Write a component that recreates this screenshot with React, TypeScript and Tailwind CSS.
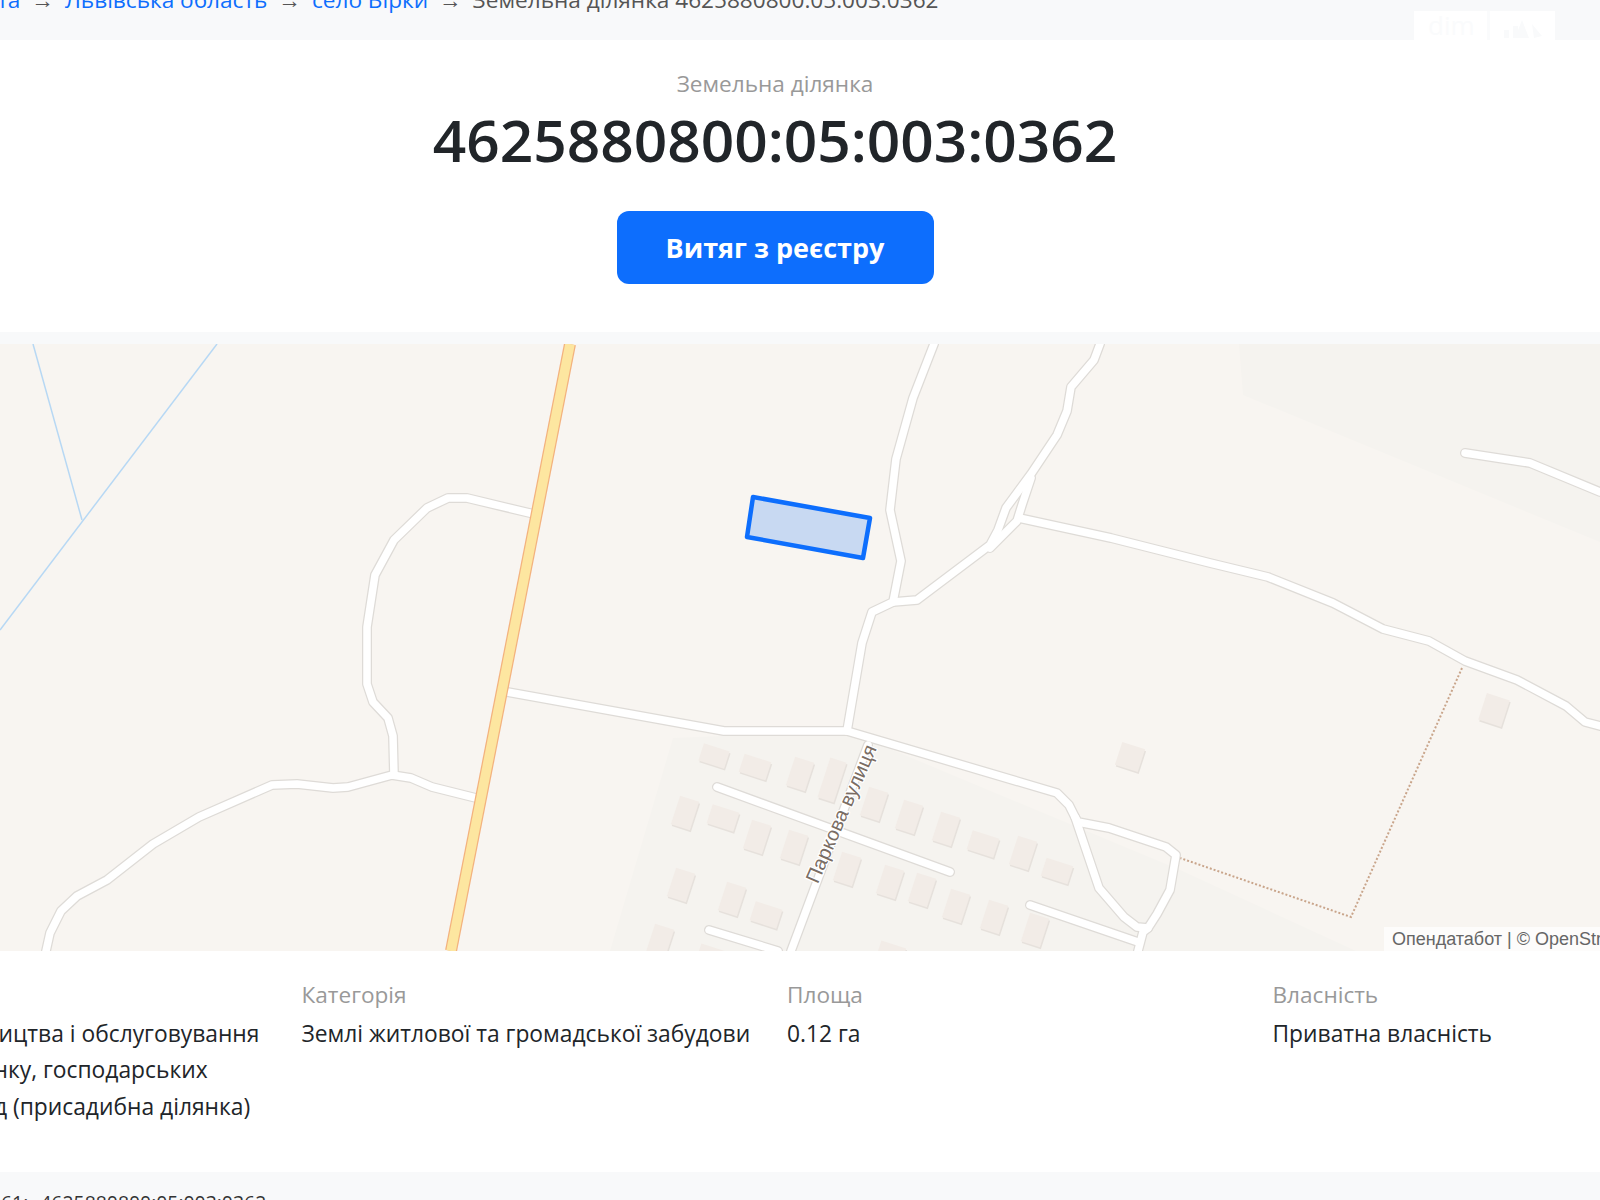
const font = "font-['Open_Sans','Noto_Sans',sans-serif]";

const roads = [
  'M534 514L467 498L448 498L427 508L394 540L375 575L367 627L367 684L373 702L388 718L393 736L394 775',
  'M476 798L432 787L411 778L392 775L348 787L333 788L297 784L272 785L199 817L153 844L107 880L77 896L61 911L50 933L46 951',
  'M507 692L724 731L847 731L1057 793L1069 805L1075 817L1099 888L1124 917L1137 927L1148 928',
  'M1075 817L1078 822L1109 828L1166 847L1176 855L1170 890L1157 914L1148 928L1143 932L1138 951',
  'M934 344L913 398L896 459L890 510L901 561L893 602L872 612L862 643L847 731',
  'M893 602L917 600L990 545L998 530L1006 508L1031 474L1057 435L1067 411L1071 387L1094 360L1100 344',
  'M990 548L1017 521L1022 505L1031 478',
  'M1019 518L1111 538L1210 563L1268 577L1333 603L1383 629L1429 641L1465 661L1517 680L1566 706L1585 722L1600 726',
  'M1465 453L1530 463L1600 492',
  'M717 787L950 872',
  'M709 930L778 951',
  'M1030 905L1138 942',
  'M868 745L791 951',
];

// x, y, w, h
const buildings = [
  [714, 756, 27, 18], [755, 767, 28, 19], [800, 774, 20, 30], [832, 780, 17, 42],
  [874, 804, 20, 30], [909, 817, 20, 30], [946, 829, 20, 30], [983, 844, 28, 20],
  [1023, 853, 20, 30], [1057, 871, 28, 19], [685, 813, 20, 30], [723, 818, 28, 20],
  [757, 837, 20, 30], [794, 847, 20, 30], [847, 869, 20, 30], [890, 882, 20, 30],
  [922, 890, 20, 30], [956, 906, 20, 30], [994, 917, 20, 30], [1035, 930, 20, 30],
  [681, 885, 20, 30], [732, 899, 20, 30], [766, 915, 28, 20], [660, 941, 20, 30],
  [711, 956, 26, 18], [891, 953, 26, 18], [1130, 757, 24, 24], [1494, 710, 24, 28],
];

function ParcelMap() {
  return (
    <svg viewBox="0 344 1600 607" className="block w-full h-full">
      <rect x="0" y="344" width="1600" height="607" fill="#f8f5f1" />
      <path d="M1239 344L1243 395L1600 542L1600 344Z" fill="#f5f3ef" />
      <path d="M673 738L847 731L1180 870L1356 951L610 951Z" fill="#f5f3ef" />

      <g fill="none" stroke="#b7d8f4" strokeWidth="1.5">
        <path d="M33 344L82 520" />
        <path d="M217 344L0 630" />
      </g>

      {buildings.map(([x, y, w, h], i) => (
        <g key={i} transform={`rotate(18 ${x} ${y})`}>
          <rect x={x - w / 2 + 1.5} y={y - h / 2 + 1.5} width={w} height={h} fill="#e6e1dc" />
          <rect x={x - w / 2} y={y - h / 2} width={w} height={h} fill="#f2ece7" />
        </g>
      ))}

      <g fill="none" stroke="#c9a58b" strokeWidth="2" strokeDasharray="2 2">
        <path d="M1462 668L1351 917L1180 858" />
      </g>

      <g fill="none" strokeLinejoin="round" strokeLinecap="round">
        {roads.map((d) => (
          <path key={d} d={d} stroke="#dedbd7" strokeWidth="10" />
        ))}
        {roads.map((d) => (
          <path key={d} d={d} stroke="#ffffff" strokeWidth="7.5" />
        ))}
        <path d="M570 344L451 951" stroke="#f3b27e" strokeWidth="12" strokeLinecap="butt" />
        <path d="M570 344L451 951" stroke="#fde6a0" strokeWidth="9.5" strokeLinecap="butt" />
      </g>

      <text
        x="842"
        y="820"
        transform="rotate(-66.5 842 814)"
        textAnchor="middle"
        fontFamily="Liberation Sans"
        fontSize="20"
        fill="#7a6d64"
        stroke="#ffffff"
        strokeWidth="2.5"
        paintOrder="stroke"
      >
        Паркова вулиця
      </text>

      <path
        d="M753 497L870 518L863 558L747 537Z"
        fill="#c8d9f2"
        stroke="#0d6efd"
        strokeWidth="4.5"
        strokeLinejoin="round"
      />
    </svg>
  );
}

function Info({ label, children }: { label: string; children: React.ReactNode }) {
  return (
    <div className="w-[485.5px] shrink-0 pr-[32px]">
      <div className="text-[22.6px] leading-[36.5px] text-[#999999]">{label}</div>
      <div className="mt-[2px] text-[22.8px] leading-[36.5px] text-[#212529]">{children}</div>
    </div>
  );
}

export default function App() {
  return (
    <div className={`${font} w-[1600px] h-[1200px] overflow-hidden bg-[#f8f9fa]`}>
      <div className="relative h-[40px] overflow-hidden">
        <div className="-mt-[18px] -ml-[43px] flex items-center gap-[11px] whitespace-nowrap text-[22.6px] leading-[36px] text-[#555555]">
          <a className="text-[#0d6efd]">Карта</a>
          <span>→</span>
          <a className="text-[#0d6efd]">Львівська область</a>
          <span>→</span>
          <a className="text-[#0d6efd]">село Вірки</a>
          <span>→</span>
          <span>Земельна ділянка 4625880800:05:003:0362</span>
        </div>
        <div className="absolute right-[45px] top-[11px] flex h-[29px] w-[141px] items-center gap-[12px] bg-white pl-[14px] text-[26px] text-[#fafbfc]">
          <span>dim</span>
          <span className="h-[29px] w-[3px] bg-[#fafbfc]" />
          <svg width="42" height="24" viewBox="0 0 42 24" fill="#f9fafb">
            <path d="M2 24V16H7V24ZM11 24V12H16V24ZM20 6L27 24H13ZM30 10L40 22L32 24Z" />
          </svg>
        </div>
      </div>

      <div className="flex h-[292px] flex-col items-center bg-white pr-[50px] pt-[27px]">
        <div className="text-[22.6px] leading-[34px] text-[#999999]">Земельна ділянка</div>
        <h1 className="mt-[2px] text-[58.6px] font-semibold leading-[72px] text-[#212529]">4625880800:05:003:0362</h1>
        <a className="mt-[36px] flex h-[73px] w-[317px] items-center justify-center rounded-[12px] bg-[#0d6efd] pt-[2px] text-[27px] font-bold text-white">
          Витяг з реєстру
        </a>
      </div>

      <div className="relative mt-[12px] h-[607px]">
        <ParcelMap />
        <div className="absolute bottom-0 right-0 flex h-[24px] w-[216px] items-center overflow-hidden whitespace-nowrap bg-white/70 pl-[8px] font-['Liberation_Sans',sans-serif] text-[18px] text-[#666666]">
          Опендатабот | © OpenStreetMap
        </div>
      </div>

      <div className="flex h-[221px] bg-white pt-[26px]">
        <div className="-ml-[184px] flex">
          <Info label="Призначення">
            02.01 Для будівництва і обслуговування житлового будинку, господарських будівель і споруд (присадибна ділянка)
          </Info>
          <Info label="Категорія">Землі житлової та громадської забудови</Info>
          <Info label="Площа">0.12 га</Info>
          <Info label="Власність">Приватна власність</Info>
        </div>
      </div>

      <div className="flex gap-[12px] pl-[1px] pt-[17px] whitespace-nowrap text-[19.4px] leading-[28px] text-[#333333]">
        <span>61:</span>
        <span>4625880800:05:003:0362</span>
      </div>
    </div>
  );
}
